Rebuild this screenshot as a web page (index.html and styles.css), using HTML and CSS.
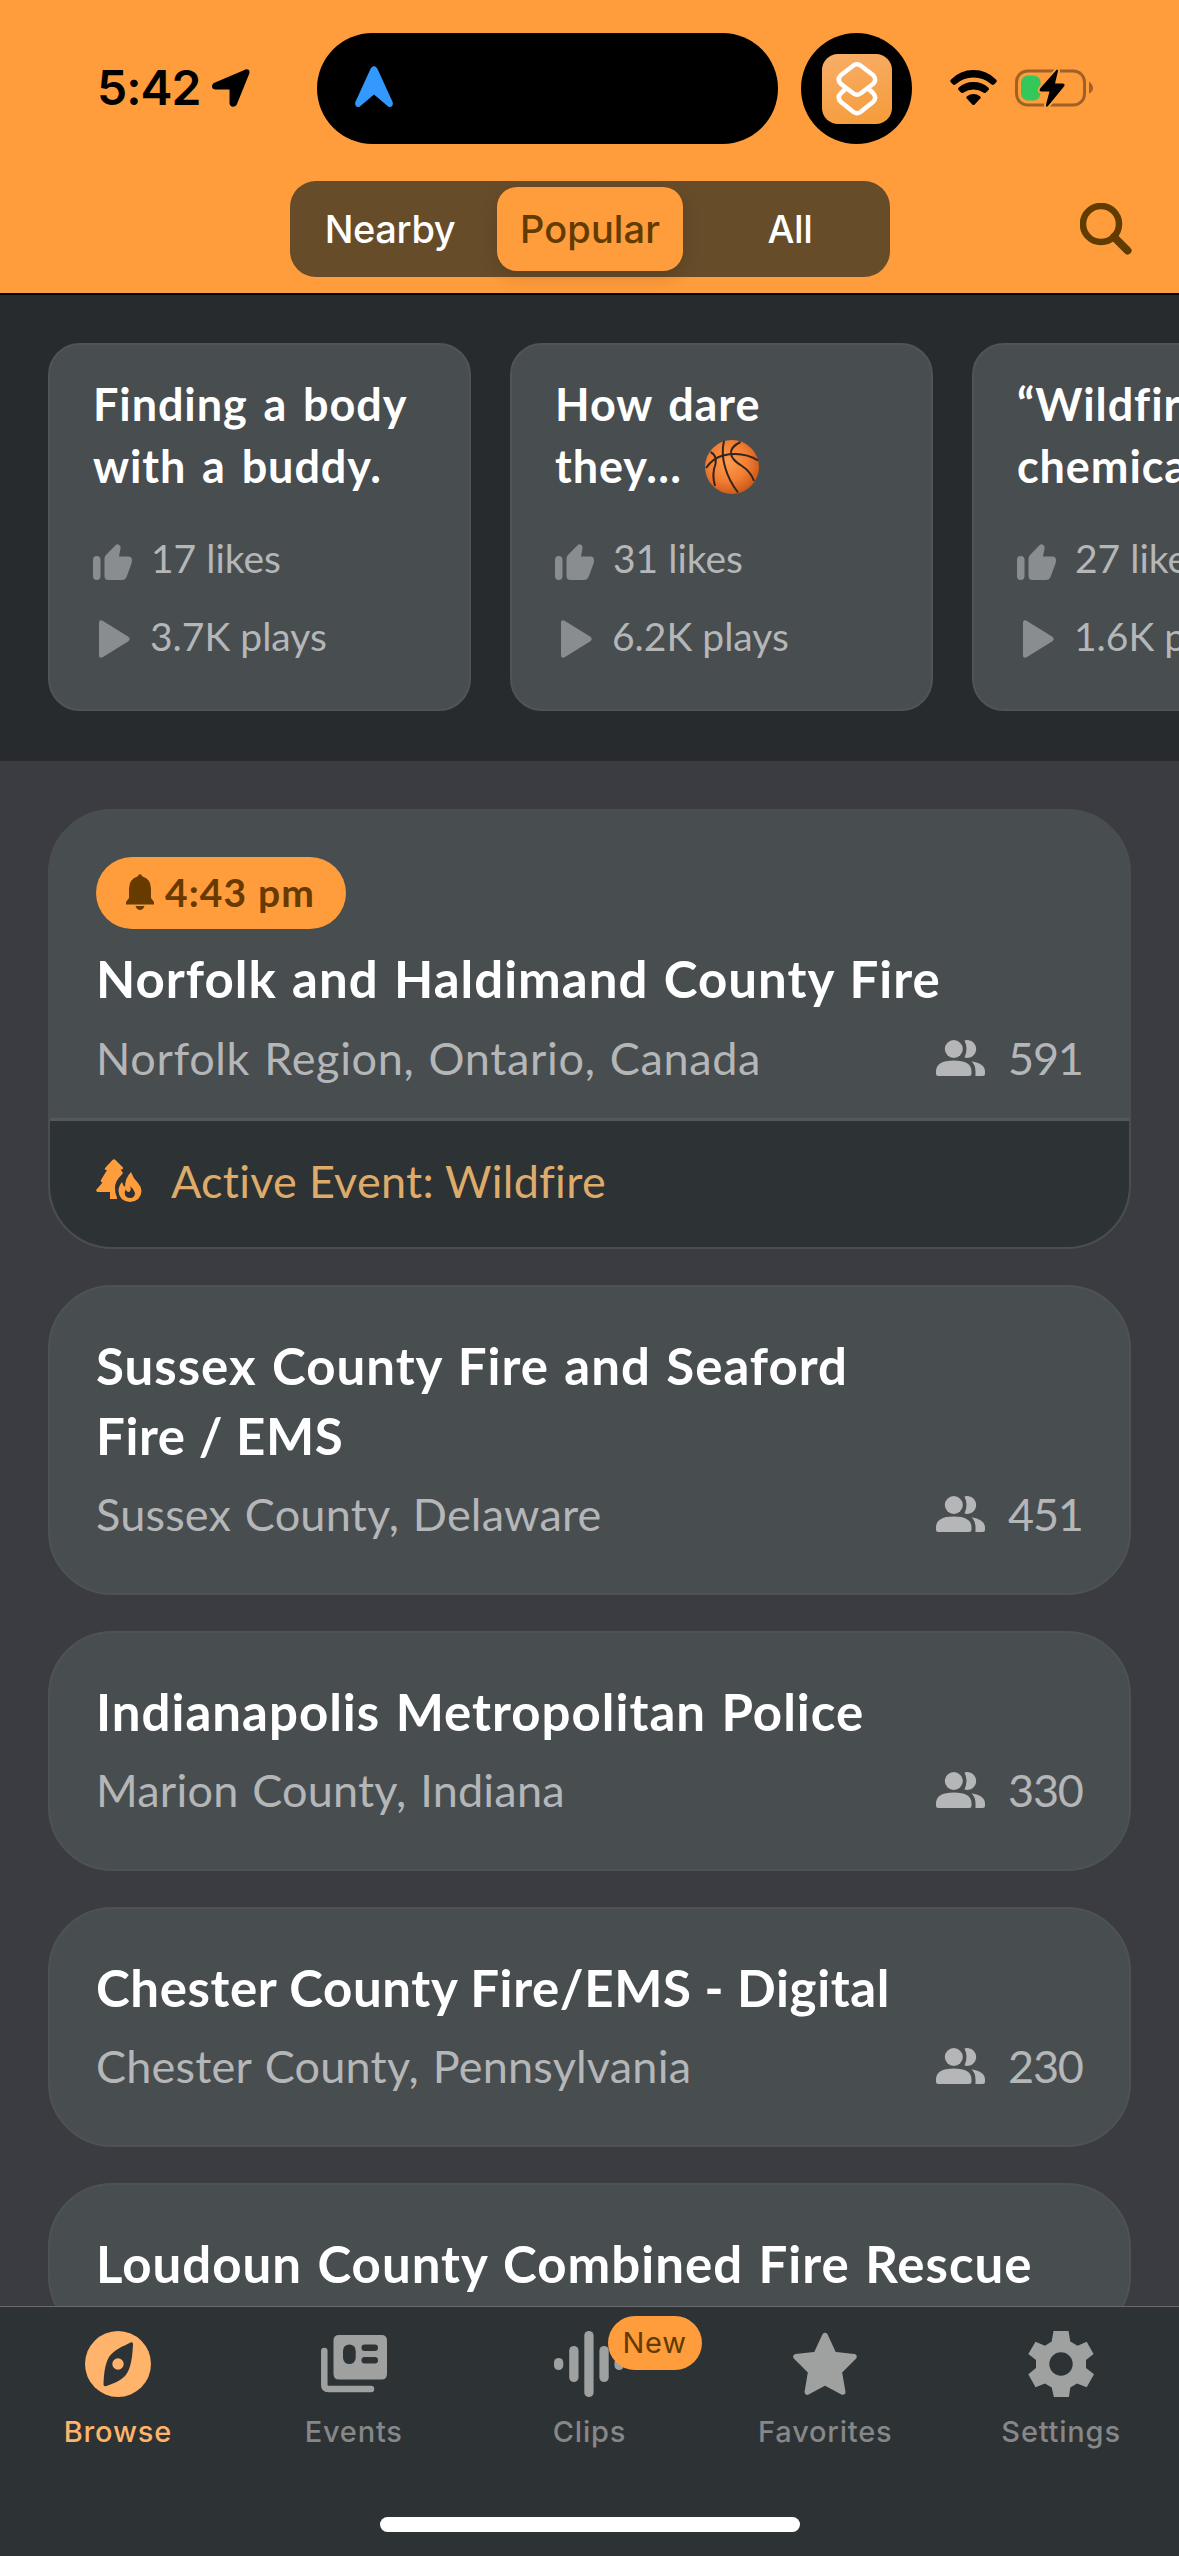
FILE: index.html
```html
<!DOCTYPE html>
<html lang="en">
<head>
<meta charset="utf-8">
<title>Browse</title>
<link rel="stylesheet" href="styles.css">
</head>
<body>
<svg class="defs" width="0" height="0" aria-hidden="true">
  <symbol id="thumb" viewBox="0 0 39 36"><rect x="0" y="12" width="7.5" height="24" rx="3.7"/><path d="M11.500 32V14.500Q11.500 12.500 13 11L22.500 1.200Q24.500-.5 26.500 1.200 28 2.500 27.500 4.500L26 12.500H35.500Q39 12.500 39 16 39 18.500 38 21L33.700 32.500Q32.400 36 29 36H15.500Q11.500 36 11.500 32Z"/></symbol>
  <symbol id="play" viewBox="0 0 31 38"><path d="M0 3.200Q0-1.200 4 .9L29 16.500Q32.500 19 29 21.500L4 37.100Q0 39.200 0 34.800Z"/></symbol>
  <symbol id="people" viewBox="0 0 49 36"><circle cx="17.800" cy="9" r="9"/><path d="M28.500.4A9 9 0 1 1 28.500 17.600Q32.500 9 28.500.4Z"/><path d="M0 31.500Q0 20.500 17.800 20.500T35.500 31.500V33.500Q35.500 36 33 36H2.500Q0 36 0 33.500Z"/><path d="M35.500 21.200Q49 23.500 49 31.500V33.500Q49 36 46.500 36H39.500V31.500Q39.500 25 35.500 21.200Z"/></symbol>
</svg>
<div class="screen">
  <header class="header">
    <div class="status">
      <div class="clock"><span>5:42</span><svg width="38" height="38" viewBox="0 0 38 38"><path d="M33 .8C36-.6 38.400 1.500 37.200 4.800L25 35C23.500 38.800 17.500 38.500 17.500 34V20.500H3.500C-.8 20.500-1.200 15.500 2.500 13.800Z"/></svg></div>
      <div class="island"><svg width="38" height="41" viewBox="0 0 38 41"><path d="M15.700 2.600Q19-2.600 22.300 2.600L37.600 36Q38.600 40.500 35 41 33.500 41 32 39.500L19 28.500 6 39.500Q4.500 41 3 41-.6 40.500.4 36Z" fill="#3399ff"/></svg></div>
      <div class="bubble"><span class="app"><svg width="42" height="54" viewBox="0 0 42 54" fill="none" stroke="#fff" stroke-width="4.500" stroke-linejoin="round"><path d="M17.500 3.500Q21 1 24.500 3.500L37 13Q41.500 17.500 37 22L24.500 31.500Q21 34 17.500 31.500L5 22Q.5 17.500 5 13Z"/><path d="M10 26.500L5 31Q.5 35.500 5 40L17.500 50Q21 52.500 24.500 50L37 40Q41.500 35.500 37 31L32 26.500"/></svg></span></div>
      <svg class="wifi" width="47" height="36" viewBox="0 0 47 36"><path d="M1 12.500Q-.5 11 1 9.500Q10 0 23.500 0T46 9.500Q47.500 11 46 12.500L44 14.500Q42.700 15.500 41.300 14.300Q34 7.500 23.500 7.500T5.700 14.300Q4.300 15.500 3 14.500Z"/><path d="M8.500 20Q7.500 19 8.500 17.800Q14.500 12 23.500 12T38.500 17.800Q39.500 19 38.500 20L35.700 22.800Q34.500 23.500 33.300 22.600Q29 19.500 23.500 19.500T13.700 22.600Q12.500 23.500 11.300 22.800Z"/><path d="M16.500 28.200Q15.800 27.200 17 26.300Q20 24 23.500 24T30 26.300Q31.200 27.200 30.500 28.200L24.700 34.400Q23.500 35.500 22.300 34.400Z"/></svg>
      <svg class="battery" width="80" height="40" viewBox="0 0 80 40"><rect x="1.500" y="3" width="68" height="34" rx="11" fill="none" stroke="#9f6127" stroke-width="3"/><path d="M74 13.500Q78 16.500 78 20T74 25.500Z" fill="#9f6127"/><rect x="6" y="7.500" width="19.500" height="25" rx="7" fill="#34c759"/><path class="bolt" d="M41 2.500Q42.500.5 43 3L40 15.500H48Q50.500 16 49 18.500L33 38Q30.500 40 31 36.500L34.500 23.500H26Q23.500 23 25.500 20Z"/></svg>
    </div>
    <div class="nav">
      <div class="segments"><span class="seg">Nearby</span><span class="seg on">Popular</span><span class="seg">All</span></div>
      <svg class="search" width="52" height="52" viewBox="0 0 52 52" fill="none" stroke="#613b00"><circle cx="21" cy="21" r="18" stroke-width="6.500"/><path d="M34 34L47.500 47.500" stroke-width="8" stroke-linecap="round"/></svg>
    </div>
  </header>

  <section class="clips">
    <article class="clip"><h3>Finding a body<br>with a buddy.</h3><p><svg class="thumb"><use href="#thumb"/></svg>17 likes</p><p><svg class="play"><use href="#play"/></svg>3.7K plays</p></article>
    <article class="clip"><h3>How dare<br>they… <svg class="ball" viewBox="0 0 54 54"><defs><radialGradient id="bg" cx=".42" cy=".4" r=".62"><stop offset="0" stop-color="#ff9c4c"/><stop offset=".6" stop-color="#f27d33"/><stop offset="1" stop-color="#cc5a18"/></radialGradient></defs><circle cx="27" cy="27" r="27" fill="url(#bg)"/><path d="M1 28Q8 18 18 15.500 38 11 53 20.500M19 1Q16 13 20 27 24 41 33 52.500M35.500 2Q25 7 26 14 27 20 37 26 46 32 49 41M5.500 12Q12 15 10.500 24 6.500 34 10 46" fill="none" stroke="#33251d" stroke-width="2"/></svg></h3><p><svg class="thumb"><use href="#thumb"/></svg>31 likes</p><p><svg class="play"><use href="#play"/></svg>6.2K plays</p></article>
    <article class="clip"><h3>“Wildfire<br>chemical</h3><p><svg class="thumb"><use href="#thumb"/></svg>27 likes</p><p><svg class="play"><use href="#play"/></svg>1.6K plays</p></article>
  </section>

  <main class="feeds">
    <article class="feed alert">
      <div class="body">
        <span class="time"><svg width="28" height="36" viewBox="0 0 28 36"><path d="M11.500 2.500Q14-2.200 16.500 2.500 25 5 25 15V24L28 28V30.500H0V28L3 24V15Q3 5 11.500 2.500ZM9.500 32H18.500Q17 36 14 36T9.500 32Z"/></svg>4:43 pm</span>
        <h2>Norfolk and Haldimand County Fire</h2>
        <div class="meta"><span>Norfolk Region, Ontario, Canada</span><span class="count"><svg class="people"><use href="#people"/></svg><b>591</b></span></div>
      </div>
      <div class="event"><svg width="46" height="43" viewBox="0 0 46 43"><path d="M16.500 1Q18-.5 19.500 1L27 8.500Q27.500 10.500 25.500 10.500H24.500L27 14 25 16.500Q19 22 19 29 19 35 21 38.500V40H14V33H1.500Q-.5 32 .5 30.500L6.500 23.500Q4 23 5 21L11 11H9.500Q8 10 9.500 8.500Z"/><path d="M35 13Q37 19 42 24 45.500 28 45.500 32 45 42 34 43 23 42 22.500 32 22.500 27 26 23 27 27 29 28 29 19 35 13ZM34 27Q36 31 33 33 30 33 30 30 28 33 29 36 30.500 39 34 39 39 39 39 34 38 30 34 27Z" fill-rule="evenodd"/></svg><span>Active Event: Wildfire</span></div>
    </article>
    <article class="feed"><div class="body"><h2>Sussex County Fire and Seaford<br><span class="tight">Fire / EMS</span></h2><div class="meta"><span>Sussex County, Delaware</span><span class="count"><svg class="people"><use href="#people"/></svg><b>451</b></span></div></div></article>
    <article class="feed"><div class="body"><h2>Indianapolis Metropolitan Police</h2><div class="meta"><span>Marion County, Indiana</span><span class="count"><svg class="people"><use href="#people"/></svg><b>330</b></span></div></div></article>
    <article class="feed"><div class="body"><h2 class="tight">Chester County Fire/EMS - Digital</h2><div class="meta"><span>Chester County, Pennsylvania</span><span class="count"><svg class="people"><use href="#people"/></svg><b>230</b></span></div></div></article>
    <article class="feed"><div class="body"><h2>Loudoun County Combined Fire Rescue</h2></div></article>
  </main>

  <footer class="footer">
    <nav class="tabs">
      <a class="tab active"><svg width="66" height="66" viewBox="0 0 66 66"><circle cx="33" cy="33" r="33"/><path d="M45.500 11.500Q48 10.500 48 13C47.500 26 46 38 40 45 34 51 27 53 20.500 55.300Q18.500 55.500 18.500 53.500C19 42 20 33 24 26 29 18.500 38 15.500 45.500 11.500Z" fill="#2d3235"/><circle cx="33" cy="33" r="5.700"/></svg>Browse</a>
      <a class="tab"><svg width="66" height="66" viewBox="0 0 66 66"><path d="M3.300 20V54Q3.300 58 7.300 58H50" fill="none" stroke="#9fa1a0" stroke-width="6.500" stroke-linecap="round"/><path d="M18 4H60.500Q66 4 66 9.500V43Q66 48.500 60.500 48.500H18Q12.500 48.500 12.500 43V9.500Q12.500 4 18 4Z"/><g fill="#2d3235"><rect x="22" y="13.500" width="12.700" height="19.500" rx="6.300"/><rect x="40.500" y="13.500" width="16.500" height="6.500" rx="3.200"/><rect x="40.500" y="26" width="16.500" height="6.500" rx="3.200"/></g></svg>Events</a>
      <a class="tab"><svg width="70" height="66" viewBox="0 0 70 66"><rect x="0" y="27" width="9.300" height="12" rx="4.600"/><rect x="15.200" y="15" width="9.300" height="36" rx="4.600"/><rect x="30.300" y="0" width="9.300" height="66" rx="4.600"/><rect x="45.400" y="15" width="9.300" height="36" rx="4.600"/><rect x="60.500" y="27" width="9.300" height="12" rx="4.600"/></svg><span class="badge">New</span>Clips</a>
      <a class="tab"><svg width="66" height="66" viewBox="0 0 66 66"><path d="M33 4.500L41.800 23.500 62 25.700 47.200 40.500 50.700 61 33 51.500 15.300 61 18.800 40.500 4 25.700 24.200 23.500Z" stroke="#9fa1a0" stroke-width="5.500" stroke-linejoin="round"/></svg>Favorites</a>
      <a class="tab"><svg width="66" height="66" viewBox="0 0 66 66"><path d="M25.500 0H40.500L42.300 10.500 49.500 14.700 58.700 10.800 65.600 23 58 29V37L66 43.300 58.700 56.300 49 52.500 42.300 56.400 40.900 66H25.900L23.700 56.400 17 52.500 7.500 56.300.3 43.300 8 37V29L.3 23 7.500 10.800 17 14.700 23.700 10.500ZM33 21.300A11.700 11.700 0 1 0 33 44.700 11.700 11.700 0 1 0 33 21.300Z" fill-rule="evenodd"/></svg>Settings</a>
    </nav>
    <div class="home"></div>
  </footer>
</div>
</body>
</html>
```
FILE: styles.css
```css
* { box-sizing: border-box; }
body, h2, h3, p { margin: 0; }
body { width: 1179px; background: #3a3c41; }
svg { display: block; flex: none; }
.defs { position: absolute; }
.screen {
  display: flex; flex-direction: column;
  width: 1179px; height: 2556px; overflow: hidden;
  font-family: Lato, "Noto Sans", sans-serif; font-variant-ligatures: none; color: #fff;
}

.header { flex: none; height: 295px; background: #ff9c3b; border-bottom: 2px solid #000; font-family: Inter, "Liberation Sans", sans-serif; }
.status { display: flex; align-items: center; height: 144px; padding-top: 33px; }
.clock { display: flex; align-items: center; gap: 12px; width: 317px; padding: 0 0 2px 97px; font-size: 48px; font-weight: 600; letter-spacing: -1px; color: #000; }
.island { display: flex; align-items: center; width: 461px; height: 111px; padding: 0 38px 4px; border-radius: 56px; background: #000; }
.bubble { display: flex; align-items: center; justify-content: center; width: 111px; height: 111px; margin-left: 23px; border-radius: 50%; background: #000; }
.app { display: flex; align-items: center; justify-content: center; width: 70px; height: 70px; border-radius: 16px; background: linear-gradient(165deg, #f8ae68, #f59b38); }
.wifi { margin-left: 38px; margin-bottom: 2px; }
.battery { margin-left: 18px; margin-bottom: 2px; }
.bolt { stroke: #ff9c3b; stroke-width: 4; paint-order: stroke; }
.nav { display: flex; align-items: center; height: 96px; margin-top: 37px; padding-left: 290px; }
.segments { display: grid; grid-template-columns: repeat(3, 200px); width: 600px; height: 96px; padding: 6px 0; border-radius: 26px; background: #674c29; }
.seg { display: flex; align-items: center; justify-content: center; margin: 0 7px; font-size: 38px; font-weight: 500; letter-spacing: -.4px; }
.seg.on { border-radius: 20px; background: #ff9c3b; color: #613b00; font-weight: 500; letter-spacing: .1px; box-shadow: 0 6px 18px rgba(0,0,0,.14); }
.search { margin-left: 190px; }

.clips { flex: none; display: flex; gap: 39px; height: 466px; padding: 48px 0 0 48px; background: #272b2e; }
.clip { flex: none; width: 423px; height: 368px; padding: 28px 43px; border: 2px solid #505457; border-radius: 32px; background: #484d50; }
.clip h3 { margin-bottom: 22px; font-size: 45px; line-height: 62px; font-weight: 700; letter-spacing: .9px; word-spacing: 4px; white-space: nowrap; }
.clip p { display: flex; align-items: center; height: 78px; font-size: 39px; color: #b5b6b8; white-space: nowrap; }
.clip p svg { fill: #898d90; }
.thumb { width: 39px; height: 36px; margin: 7px 19px 0 0; }
.play { width: 31px; height: 38px; margin: 5px 20px 0 6px; }
.ball { display: inline-block; width: 54px; height: 54px; margin-left: 7px; vertical-align: -11px; }

.feeds { flex: 1; min-height: 0; display: flex; flex-direction: column; gap: 36px; padding: 48px 48px 0; overflow: hidden; background: #3a3c41; }
.feed { flex: none; border: 2px solid #4e5255; border-radius: 64px; background: #484d50; overflow: hidden; }
.alert { border-color: #4a4e51; }
.body { padding: 44px 47px 39px 46px; }
.feed h2 { font-size: 51px; line-height: 70px; font-weight: 700; letter-spacing: 1px; word-spacing: 2px; white-space: nowrap; }
.feed .tight { letter-spacing: .6px; word-spacing: 0; }
.meta { display: flex; align-items: center; justify-content: space-between; height: 78px; margin-top: 4px; margin-bottom: 1px; font-size: 45px; letter-spacing: .2px; word-spacing: 2px; color: #b5b6b8; }
.count { display: flex; align-items: center; }
.count b { width: 74px; margin-left: 23px; font-weight: 400; letter-spacing: -1.2px; }
.people { width: 49px; height: 36px; fill: #b5b6b8; }
.alert .body { padding-top: 46px; padding-bottom: 20px; border-bottom: 3px solid #54575b; }
.alert .meta { margin-top: 5px; letter-spacing: .65px; }
.alert .count b { letter-spacing: -1.2px; }
.time { display: flex; align-items: center; gap: 11px; width: 250px; height: 72px; margin-bottom: 15px; padding: 0 0 3px 30px; border-radius: 36px; background: #ff9c3b; color: #673a00; fill: #673a00; font-size: 39px; font-weight: 700; letter-spacing: 1.1px; }
.event { display: flex; align-items: center; gap: 29px; height: 126px; padding: 0 46px 7px; background: #2d3235; color: #dfab6a; fill: #ff9c3b; font-size: 45px; letter-spacing: .25px; }

.footer { flex: none; height: 250px; border-top: 1px solid #67696b; background: #2d3235; font-family: Inter, "Liberation Sans", sans-serif; }
.tabs { display: grid; grid-template-columns: repeat(5, 1fr); height: 210px; padding-top: 24px; }
.tab { position: relative; display: flex; flex-direction: column; align-items: center; gap: 16px; font-size: 29px; line-height: 38px; font-weight: 500; letter-spacing: .8px; color: #858788; fill: #9fa1a0; }
.active { color: #ffb36b; fill: #ffb36b; }
.badge { position: absolute; top: -15px; left: 136px; width: 94px; height: 54px; border-radius: 27px; background: #ff9c3b; color: #613b00; line-height: 54px; text-align: center; font-weight: 400; }
.home { width: 420px; height: 15px; margin: 0 auto; border-radius: 8px; background: #fff; }
```
